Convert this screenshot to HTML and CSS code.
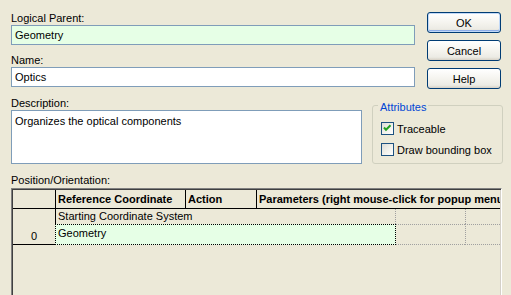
FILE: index.html
```html
<!DOCTYPE html>
<html>
<head>
<meta charset="utf-8">
<link rel="stylesheet" href="styles.css">
</head>
<body>
<div class="dlg">
  <div class="row1">
    <div class="fields">
      <div class="lbl">Logical Parent:</div>
      <div class="input green">Geometry</div>
      <div class="lbl lbl-gap">Name:</div>
      <div class="input">Optics</div>
    </div>
    <div class="buttons">
      <div class="btn default">OK</div>
      <div class="btn">Cancel</div>
      <div class="btn">Help</div>
    </div>
  </div>
  <div class="row2">
    <div class="desc">
      <div class="lbl">Description:</div>
      <div class="textarea">Organizes the optical components</div>
    </div>
    <fieldset class="attrs">
      <legend>Attributes</legend>
      <div class="chk-row"><span class="chk"><svg width="11" height="11" viewBox="0 0 11 11"><path d="M2 4.5 L4 6.8 L8.5 2.2" fill="none" stroke="#21A121" stroke-width="2"/></svg></span>Traceable</div>
      <div class="chk-row"><span class="chk"></span>Draw bounding box</div>
    </fieldset>
  </div>
  <div class="row3">
    <div class="lbl pos-lbl">Position/Orientation:</div>
    <div class="grid">
      <div class="ghead">
        <div class="hc hc-row"></div>
        <div class="hc hc-ref">Reference Coordinate System</div>
        <div class="hc hc-act">Action</div>
        <div class="hc hc-par">Parameters (right mouse-click for popup menu)</div>
      </div>
      <div class="gbody">
        <div class="rowhead">0</div>
        <div class="c-start">Starting Coordinate System</div>
        <div class="c-dot c3 r1"></div>
        <div class="c-dot c4 r1"></div>
        <div class="c-geo">Geometry</div>
        <div class="c-dot c3 r2"></div>
        <div class="c-dot c4 r2"></div>
      </div>
    </div>
  </div>
</div>
</body>
</html>
```
FILE: styles.css
```css
html, body {
  margin: 0;
  padding: 0;
  background: #ECE9D8;
  overflow: hidden;
}
body {
  font-family: "Liberation Sans", Arial, sans-serif;
  font-size: 11px;
  color: #000;
  width: 511px;
  height: 295px;
}
.dlg {
  display: flex;
  flex-direction: column;
}
.lbl {
  line-height: 12px;
  height: 12px;
  margin-bottom: 1px;
  white-space: nowrap;
}
.lbl-gap {
  margin-top: 9px;
}
.row1 {
  display: flex;
  align-items: flex-start;
  padding: 12px 0 0 11px;
}
.fields {
  width: 404px;
  display: flex;
  flex-direction: column;
}
.input {
  box-sizing: border-box;
  height: 20px;
  border: 1px solid #7F9DB9;
  background: #FFFFFF;
  padding: 2px 3px 0;
  line-height: 15px;
}
.input.green {
  background: #E6FFE6;
}
.buttons {
  margin-left: 12px;
  width: 74px;
  display: flex;
  flex-direction: column;
  gap: 7px;
}
.btn {
  box-sizing: border-box;
  height: 21px;
  border: 1px solid #003C74;
  border-radius: 3px;
  background: linear-gradient(#FFFFFF 0%, #F5F4EF 50%, #ECEBE4 85%, #D6D0C5 100%);
  display: flex;
  align-items: center;
  justify-content: center;
  padding-top: 1px;
}
.btn.default {
  box-shadow: inset 0 0 0 1px #C2D9F7, inset 0 -1px 0 1px #8FAEE8;
}
.row2 {
  display: flex;
  align-items: flex-start;
  margin-top: 8px;
  padding-left: 11px;
}
.desc {
  width: 351px;
  display: flex;
  flex-direction: column;
}
.textarea {
  box-sizing: border-box;
  height: 54px;
  border: 1px solid #7F9DB9;
  background: #FFFFFF;
  padding: 4px 3px 0;
  line-height: 13px;
}
.attrs {
  box-sizing: border-box;
  width: 131px;
  min-inline-size: 0;
  margin: 0 0 0 10px;
  padding: 4px 8px 3px;
  border: 1px solid #D0D0BF;
  border-radius: 3px;
}
.attrs legend {
  color: #0046D5;
  padding: 4px 2px 0;
  margin-left: -3px;
  line-height: 13px;
}
.chk-row {
  display: flex;
  align-items: center;
  height: 21px;
  white-space: nowrap;
}
.chk {
  box-sizing: border-box;
  width: 13px;
  height: 13px;
  border: 1px solid #1C5180;
  background: linear-gradient(135deg, #DCDCD7 0%, #F0F0EA 50%, #FFFFFF 100%);
  margin-right: 3px;
  display: flex;
}
.row3 {
  display: flex;
  flex-direction: column;
  margin-top: 10px;
  padding: 0 9px 0 11px;
}
.pos-lbl {
  margin-bottom: 2px;
}
.grid {
  box-sizing: border-box;
  height: 107px;
  border-style: solid;
  border-width: 1px 1px 0 1px;
  border-color: #808080 #FFFFFF #FFFFFF #808080;
  box-shadow: inset 1px 1px 0 #404040, inset -1px 0 0 #D4D0C8;
  padding: 1px 1px 0 1px;
  overflow: hidden;
}
.ghead {
  display: flex;
  height: 19px;
  box-sizing: border-box;
  border-bottom: 1px solid #000;
  font-weight: bold;
}
.hc {
  box-sizing: border-box;
  height: 18px;
  padding: 3px 0 0 2px;
  line-height: 13px;
  overflow: hidden;
  border-right: 1px solid #000;
  flex: none;
}
.hc-row { width: 43px; }
.hc-ref { width: 130px; }
.hc-act { width: 71px; }
.hc-par {
  flex: 1;
  border-right: none;
  white-space: nowrap;
}
.gbody {
  display: grid;
  grid-template-columns: 43px 339px 70px 1fr;
  grid-template-rows: 15px 21px;
}
.rowhead {
  grid-column: 1;
  grid-row: 1 / 3;
  border-right: 1px solid #000;
  border-bottom: 1px solid #000;
  text-align: center;
  padding-top: 21px;
  line-height: 13px;
}
.c-start {
  grid-column: 2;
  grid-row: 1;
  padding: 1px 0 0 2px;
  line-height: 13px;
  white-space: nowrap;
}
.c-geo {
  grid-column: 2;
  grid-row: 2;
  box-sizing: border-box;
  margin-right: -1px;
  margin-left: -1px;
  border: 1px dotted #000;
  background: #E6FFE6;
  padding: 2px 0 0 2px;
  line-height: 13px;
  position: relative;
  z-index: 1;
}
.c-dot {
  box-sizing: border-box;
  border-left: 1px dotted #A0A0A0;
}
.c3 { grid-column: 3; }
.c4 { grid-column: 4; }
.r1 { grid-row: 1; }
.r2 {
  grid-row: 2;
  border-top: 1px dotted #A0A0A0;
  border-bottom: 1px dotted #A0A0A0;
}
```
